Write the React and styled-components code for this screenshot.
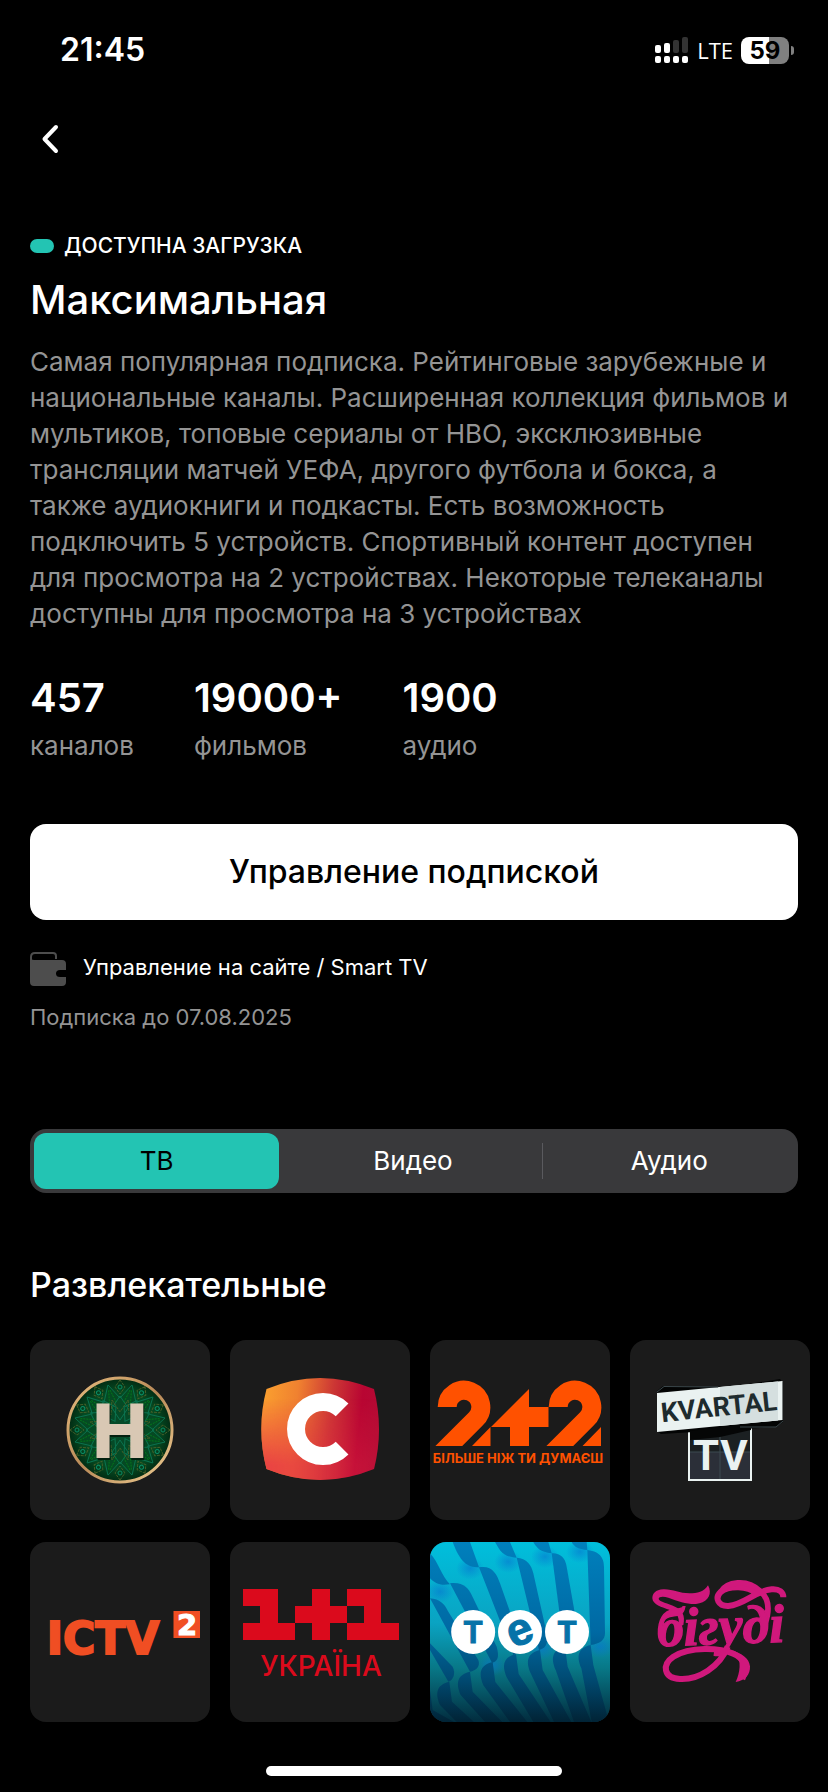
import React, { useState } from "react";
import styled, { createGlobalStyle } from "styled-components";

const GlobalStyle = createGlobalStyle`
    * {
        box-sizing: border-box;
    }
    body {
        margin: 0;
        background-color: #000;
        color: #fff;
        font-family: Inter, "Noto Sans", sans-serif;
    }
`

const Page = styled.div`
    display: flex;
    flex-direction: column;
    overflow-x: hidden;
    min-height: 100vh;
`
const StatusBar = styled.header`
    display: flex;
    justify-content: space-between;
    align-items: center;
    height: 100px;
    padding: 0 34px 0 60px;
`
const Clock = styled.time`
    font-size: 32px;
    line-height: 40px;
    font-weight: 600;
`
const StatusIcons = styled.div`
    display: flex;
    align-items: center;
    gap: 8px;
`
const Network = styled.span`
    font-family: "Open Sans", sans-serif;
    font-size: 22px;
    line-height: 28px;
`
const Battery = styled.div`
    display: flex;
    align-items: center;
    gap: 2px;
`
const BatteryBody = styled.div`
    width: 48px;
    height: 27px;
    border-radius: 8px;
    background: linear-gradient(90deg, #fff 59%, #808080 59%);
    color: #000;
    font-size: 24px;
    line-height: 27px;
    font-weight: 700;
    text-align: center;
`
const BatteryTip = styled.div`
    width: 3px;
    height: 9px;
    border-radius: 0 4px 4px 0;
    background-color: #808080;
`
const NavBar = styled.nav`
    display: flex;
    padding: 16px 28px;
`
const BackButton = styled.button`
    display: flex;
    align-items: center;
    justify-content: center;
    width: 46px;
    height: 46px;
    padding: 0;
    border: none;
    background: none;
    color: #fff;
`
const Content = styled.main`
    display: flex;
    flex-direction: column;
    padding: 52px 30px 0;
`
const Badge = styled.div`
    display: flex;
    align-items: center;
    gap: 10px;
    font-size: 21px;
    line-height: 32px;
    font-weight: 500;
`
const BadgeDot = styled.span`
    width: 24px;
    height: 14px;
    border-radius: 7px;
    background-color: #23c4b3;
`
const Title = styled.h1`
    margin: 12px 0 0;
    font-size: 40px;
    line-height: 52px;
    font-weight: 500;
`
const Description = styled.p`
    margin: 18px 0 0;
    color: #949494;
    font-size: 26px;
    line-height: 36px;
`
const Stats = styled.dl`
    display: flex;
    gap: 60px;
    margin: 40px 0 0;
`
const Stat = styled.div`
    display: flex;
    flex-direction: column-reverse;
`
const StatLabel = styled.dt`
    margin-top: 4px;
    color: #949494;
    font-size: 26px;
    line-height: 36px;
`
const StatValue = styled.dd`
    margin: 0;
    font-size: 40px;
    line-height: 52px;
    font-weight: 600;
`
const ManageButton = styled.button`
    height: 96px;
    margin-top: 60px;
    border: none;
    border-radius: 16px;
    background-color: #fff;
    color: #000;
    font-family: inherit;
    font-size: 32px;
    line-height: 40px;
    font-weight: 500;
`
const ManageNote = styled.div`
    display: flex;
    align-items: flex-start;
    gap: 16px;
    margin-top: 31px;
    font-size: 22px;
    line-height: 32px;
`
const Expires = styled.p`
    margin: 12px 0 0;
    color: #949494;
    font-size: 22px;
    line-height: 36px;
`
const Tabs = styled.div`
    display: grid;
    grid-template-columns: 1fr 1px 1fr 1px 1fr;
    height: 64px;
    margin-top: 94px;
    border-radius: 16px;
    background-color: #39393b;
`
const Tab = styled.button`
    min-width: 0;
    margin: 4px 6px 4px 4px;
    padding: 0;
    border: none;
    border-radius: 12px;
    background-color: ${props => props.$active ? "#23c4b3" : "transparent"};
    color: ${props => props.$active ? "#000" : "#fff"};
    font-family: inherit;
    font-size: 26px;
    line-height: 36px;
`
const TabDivider = styled.span`
    margin: 14px 0;
    background-color: ${props => props.$visible ? "#5a5a5e" : "transparent"};
`
const SectionTitle = styled.h2`
    margin: 71px 0 0;
    font-size: 34px;
    line-height: 42px;
    font-weight: 500;
`
const ChannelGrid = styled.div`
    display: grid;
    grid-template-columns: repeat(4, 180px);
    gap: 22px 20px;
    margin-top: 34px;
`
const Channel = styled.a`
    display: block;
    height: 180px;
    border-radius: 16px;
    overflow: hidden;
    background-color: #1b1b1b;
`
const Logo = styled.svg`
    display: block;
    width: 100%;
    height: 100%;
`
const HomeIndicator = styled.div`
    align-self: center;
    width: 296px;
    height: 10px;
    margin: auto 0 16px;
    border-radius: 5px;
    background-color: #fff;
`

const SignalIcon = () => (
    <svg width="34" height="28" viewBox="0 0 34 28" fill="#fff" aria-hidden="true">
        <rect x="0" y="9" width="6" height="8" rx="2" />
        <rect x="9" y="7" width="6" height="10" rx="2" />
        <rect x="18" y="4" width="6" height="13" rx="2" fill="#333" />
        <rect x="27" y="1" width="6" height="16" rx="2" fill="#333" />
        {[0, 9, 18, 27].map(x => <rect key={x} x={x} y="20" width="6" height="7" rx="2" />)}
    </svg>
)

const BackIcon = () => (
    <svg width="46" height="46" viewBox="0 0 46 46" fill="none" aria-hidden="true">
        <path d="M28 11 L16.500 23 L28 35" stroke="#fff" strokeWidth="4" strokeLinecap="round" strokeLinejoin="round" />
    </svg>
)

const WalletIcon = () => (
    <svg width="37" height="36" viewBox="0 0 37 36" aria-hidden="true">
        <path d="M1 12 V6 Q1 2 5 2 H23 Q26 2 26 5 V8" fill="none" stroke="#4d4d4d" strokeWidth="2" />
        <path d="M0 7 Q1 9 4 9 H32 Q36 9 36 13 V19 H30 Q26 19 26 22.500 Q26 26 30 26 H36 V31 Q36 35 32 35 H4 Q0 35 0 31 Z" fill="#4d4d4d" />
    </svg>
)

const NovyiLogo = () => (
    <Logo viewBox="0 0 180 180" role="img" aria-label="Новый канал">
        <defs>
            <radialGradient id="green">
                <stop offset="0" stopColor="#054a2a" />
                <stop offset=".75" stopColor="#054a22" />
                <stop offset="1" stopColor="#022a12" />
            </radialGradient>
            <linearGradient id="gold" x2="1" y2="1">
                <stop offset="0" stopColor="#e8bd80" />
                <stop offset=".5" stopColor="#b98a58" />
                <stop offset="1" stopColor="#f0cf94" />
            </linearGradient>
        </defs>
        <circle cx="90" cy="90" r="52" fill="url(#green)" stroke="url(#gold)" strokeWidth="3" />
        {[0, 30, 60, 90, 120, 150, 180, 210, 240, 270, 300, 330].map(angle => (
            <g key={angle} transform={`rotate(${angle} 90 90)`} fill="none" strokeWidth="1">
                <path d="M90 56 L82 68 L90 80 L98 68 Z M78 45 L90 58 L102 45" stroke="#0b7350" />
                <path d="M90 40 L85 47 L90 54 L95 47 Z M82 60 L90 72 L98 60" stroke="#465e28" strokeDasharray="3 1" />
                <circle cx="90" cy="47" r="2" stroke="#0b8a62" />
                <path d="M80 50 L86 62 M100 50 L94 62" stroke="#04781b" strokeDasharray="2 1" />
            </g>
        ))}
        <text x="91" y="119" textAnchor="middle" fontFamily="Liberation Sans" fontWeight="700" fontSize="76" fill="#02200f" stroke="#02200f" strokeWidth="2">Н</text>
        <text x="90" y="117" textAnchor="middle" fontFamily="Liberation Sans" fontWeight="700" fontSize="76" fill="#d9c8b4" stroke="#d9c8b4" strokeWidth="2">Н</text>
    </Logo>
)

const StbLogo = () => (
    <Logo viewBox="0 0 180 180" role="img" aria-label="СТБ">
        <defs>
            <linearGradient id="stb" x1="0" y1=".2" x2="1" y2=".3">
                <stop offset="0" stopColor="#fba12f" />
                <stop offset=".3" stopColor="#f08130" />
                <stop offset=".6" stopColor="#cc3634" />
                <stop offset=".85" stopColor="#b80532" />
                <stop offset="1" stopColor="#b50a34" />
            </linearGradient>
            <linearGradient id="stbRed" x2="0" y2="1">
                <stop offset=".2" stopColor="#e62e48" stopOpacity="0" />
                <stop offset=".85" stopColor="#e62e48" />
            </linearGradient>
            <linearGradient id="stbFade">
                <stop offset="0" stopColor="#fff" />
                <stop offset="1" stopColor="#000" />
            </linearGradient>
            <mask id="stbMask">
                <rect width="180" height="180" fill="url(#stbFade)" />
            </mask>
        </defs>
        <path d="M36.500 49 Q90 27 144 49 Q154 89 144 129 Q90 151 36.500 129 Q26 89 36.500 49 Z" fill="url(#stb)" />
        <path d="M36.500 49 Q90 27 144 49 Q154 89 144 129 Q90 151 36.500 129 Q26 89 36.500 49 Z" fill="url(#stbRed)" mask="url(#stbMask)" />
        <path d="M112.100 69.900 A27 27 0 1 0 112.100 108.100" fill="none" stroke="#fff" strokeWidth="18" />
    </Logo>
)

const TwoPlusTwoLogo = () => (
    <Logo viewBox="0 0 180 180" role="img" aria-label="2+2">
        <defs>
            <clipPath id="baseline">
                <rect width="180" height="106" />
            </clipPath>
        </defs>
        <g clipPath="url(#baseline)" fill="none" stroke="#ff5100" strokeWidth="19">
            <path d="M17.200 67 A16.800 16.800 0 1 1 45.900 78.900 L8 116.800" />
            <path d="M128.200 67 A16.800 16.800 0 1 1 156.900 78.900 L119 116.800" />
        </g>
        <path d="M99 49 V67 H118.500 V87 H99 V106 H80 V87 H61 Z M42 106 L60.500 87 V106 Z M152.500 106 L171 87 V106 Z" fill="#ff5100" />
        <text x="88" y="123" textAnchor="middle" fontFamily="Inter" fontWeight="700" fontSize="13" fill="#ff5100">БІЛЬШЕ НІЖ ТИ ДУМАЄШ</text>
    </Logo>
)

const KvartalLogo = () => (
    <Logo viewBox="0 0 180 180" role="img" aria-label="Квартал ТВ">
        <rect x="59" y="80" width="62" height="60" fill="#2b2f38" stroke="#eaf2f1" strokeWidth="2" />
        <path d="M60 80 H120 V112 H60 Z" fill="#1b2022" />
        <path d="M60 112 H120 M90 90 V139" stroke="#3d4b50" />
        <text x="76" y="130" textAnchor="middle" fontFamily="Roboto" fontWeight="700" fontSize="42" fill="#eaf2f1">T</text>
        <text x="104" y="130" textAnchor="middle" fontFamily="Roboto" fontWeight="700" fontSize="42" fill="#eaf2f1">V</text>
        <path d="M27 51 L33 46 L100 47 L150 39 L153 43 L153 82 L146 87 L31 94 L27 91 Z" fill="#030404" />
        <path d="M60 91 L121 83 V90 L90 97 L60 100 Z" fill="#050606" />
        <path d="M27 53 L152.500 41 V80 L27 92 Z" fill="#eaf2f1" />
        <path d="M90 47 L148 41.500 V80.500 L90 86 Z" fill="#d5dfdf" />
        <path d="M27 52 L34 46.500 L88 47 M153 81 L146 87 L110 87" fill="none" stroke="#3b474b" />
        <text x="89" y="76" transform="rotate(-6 90 67)" textAnchor="middle" fontFamily="Roboto" fontWeight="700" fontSize="27" fill="#1e2b2e">KVARTAL</text>
    </Logo>
)

const IctvLogo = () => (
    <Logo viewBox="0 0 180 180" role="img" aria-label="ICTV2">
        <text x="73" y="112" textAnchor="middle" fontFamily="DejaVu Sans" fontWeight="700" fontSize="44" fill="#f04e23" stroke="#f04e23" strokeWidth="2">ICTV</text>
        <rect x="143.500" y="69" width="26.500" height="27" fill="#f04e23" />
        <text x="157" y="93" textAnchor="middle" fontFamily="DejaVu Sans" fontWeight="700" fontSize="29" fill="#fff" stroke="#fff">2</text>
    </Logo>
)

const OnePlusOneLogo = () => (
    <Logo viewBox="0 0 180 180" role="img" aria-label="1+1 Україна" fill="#db0a1c">
        <rect x="13" y="47" width="35" height="17" />
        <rect x="30" y="64" width="18" height="17" />
        <rect x="13" y="81" width="52" height="17" />
        <rect x="65" y="64" width="52" height="17" />
        <rect x="82" y="47" width="18" height="51" />
        <rect x="117" y="47" width="34" height="17" />
        <rect x="134" y="64" width="17" height="17" />
        <rect x="117" y="81" width="52" height="17" />
        <text x="91" y="134" textAnchor="middle" fontFamily="Inter" fontWeight="500" fontSize="28">УКРАЇНА</text>
    </Logo>
)

const upperBlades = [
    "M98 36 H150 L177 112 C140 112 120 95 98 36 Z",
    "M177 112 C215 105 230 130 240 160 L300 330 C300 360 290 372 280 375 Z",
    "M225 36 H270 L290 83 C245 80 240 60 225 36 Z",
    "M290 83 C320 85 335 105 340 130 L378 300 C388 345 375 355 357 360 Z",
    "M340 36 H385 L395 70 C360 66 350 54 340 36 Z",
    "M395 70 C430 70 436 92 440 110 L475 310 C475 340 455 348 432 350 Z",
    "M455 36 H500 L502 60 C475 58 462 50 455 36 Z",
    "M502 60 C545 65 552 90 552 110 L555 310 C555 330 540 342 512 345 Z",
    "M30 70 C55 95 65 140 90 163 C60 168 45 160 30 145 Z",
    "M90 160 C130 155 145 175 155 195 L230 350 C240 385 230 395 216 398 Z",
    "M30 205 C60 208 72 220 85 245 L175 390 C182 410 168 422 150 425 Z",
    "M30 340 L98 410 C108 430 100 450 85 455 L30 360 Z",
]
const lowerBlades = [
    [30, 480, 60], [88, 455, 120], [150, 425, 205], [218, 396, 280],
    [288, 372, 350], [360, 360, 412], [435, 350, 472], [512, 345, 525],
]

const TetLogo = () => (
    <Logo viewBox="30 36 540 540" role="img" aria-label="ТЕТ">
        <defs>
            <linearGradient id="sea" x2="0" y2="1">
                <stop offset="0" stopColor="#00bfdc" />
                <stop offset=".45" stopColor="#0aa3c2" />
                <stop offset=".7" stopColor="#087887" />
                <stop offset="1" stopColor="#022c3e" />
            </linearGradient>
            <linearGradient id="blade" gradientUnits="userSpaceOnUse" x1="0" y1="36" x2="0" y2="576">
                <stop offset="0" stopColor="#0080bd" />
                <stop offset=".5" stopColor="#0069a3" />
                <stop offset=".75" stopColor="#004c75" />
                <stop offset="1" stopColor="#012335" />
            </linearGradient>
            <radialGradient id="glow">
                <stop offset="0" stopColor="#0873cf" stopOpacity=".6" />
                <stop offset="1" stopColor="#0873cf" stopOpacity="0" />
            </radialGradient>
        </defs>
        <rect x="30" y="36" width="540" height="540" fill="url(#sea)" />
        {[[60, 185], [150, 115], [265, 95], [375, 80], [480, 65], [215, 405], [365, 355], [540, 350]].map(([x, y]) => (
            <ellipse key={x} cx={x} cy={y} rx="42" ry="34" fill="url(#glow)" />
        ))}
        {upperBlades.map(d => <path key={d} d={d} fill="url(#blade)" />)}
        {lowerBlades.map(([x, y, foot]) => (
            <path
                key={x}
                d={`M${x} ${y} C${x - 35} ${y + 8} ${x - 45} ${y + 30} ${x - 28} ${y + 70} L${foot - 10} 576 H${foot + 42} L${x + 8} ${y + 60} Z`}
                fill="url(#blade)"
            />
        ))}
        <g fill="#fff">
            <circle cx="159.500" cy="306" r="66" />
            <circle cx="300" cy="306" r="66" />
            <circle cx="441" cy="306" r="66" />
        </g>
        <g fontFamily="Liberation Sans" fontWeight="700" textAnchor="middle" fill="#0672a8" stroke="#0672a8" strokeWidth="3">
            <text x="159" y="339" fontSize="92">Т</text>
            <text x="300" y="344" fontSize="136" transform="rotate(-22 300 306)">е</text>
            <text x="441" y="339" fontSize="92">Т</text>
        </g>
    </Logo>
)

const BigudiLogo = () => (
    <Logo viewBox="30 36 540 540" role="img" aria-label="Бігуді" fill="#d0187c">
        <path d="M264 166 C252 186 232 190 208 190 C178 190 158 177 130 178 C106 179 97 192 97 205 C98 224 125 232 150 240 C177 250 178 268 176 290 L190 285 C197 255 186 240 165 230 C145 220 118 216 116 207 C116 199 130 198 145 203 C175 214 200 223 228 222 C258 219 275 200 268 175 Z" />
        <path d="M408 190 C385 166 325 166 302 186 C283 204 295 229 325 228 C375 224 405 182 455 178 C478 176 490 187 490 202" fill="none" stroke="#d0187c" strokeWidth="18" />
        <path d="M302 186 C320 155 380 145 420 183 C450 207 448 245 435 282" fill="none" stroke="#d0187c" strokeWidth="17" />
        <path d="M323 350 C300 410 235 450 180 447 C130 444 125 404 160 380 C210 348 300 353 340 371 C370 384 385 410 367 447" fill="none" stroke="#d0187c" strokeWidth="18" />
        <path d="M348 372 C365 390 360 430 347 456 C376 452 391 434 390 409 C388 384 365 371 335 360 Z" />
        <text x="302" y="342" textAnchor="middle" transform="rotate(-2 300 300)" fontFamily="Liberation Serif" fontStyle="italic" fontWeight="700" fontSize="162" stroke="#d0187c" strokeWidth="4">бігуді</text>
    </Logo>
)

const stats = [
    { value: "457", label: "каналов" },
    { value: "19000+", label: "фильмов" },
    { value: "1900", label: "аудио" },
]

const tabs = ["ТВ", "Видео", "Аудио"]

const channels = [
    NovyiLogo, StbLogo, TwoPlusTwoLogo, KvartalLogo,
    IctvLogo, OnePlusOneLogo, TetLogo, BigudiLogo,
]

const App = () => {
    const [active, setActive] = useState(0);

    return (
        <Page>
            <GlobalStyle />
            <StatusBar>
                <Clock>21:45</Clock>
                <StatusIcons>
                    <SignalIcon />
                    <Network>LTE</Network>
                    <Battery>
                        <BatteryBody>59</BatteryBody>
                        <BatteryTip />
                    </Battery>
                </StatusIcons>
            </StatusBar>
            <NavBar>
                <BackButton type="button" aria-label="Назад">
                    <BackIcon />
                </BackButton>
            </NavBar>
            <Content>
                <Badge>
                    <BadgeDot />
                    ДОСТУПНА ЗАГРУЗКА
                </Badge>
                <Title>Максимальная</Title>
                <Description>
                    Самая популярная подписка. Рейтинговые зарубежные и национальные каналы.
                    Расширенная коллекция фильмов и мультиков, топовые сериалы от HBO,
                    эксклюзивные трансляции матчей УЕФА, другого футбола и бокса, а также
                    аудиокниги и подкасты. Есть возможность подключить 5 устройств. Спортивный
                    контент доступен для просмотра на 2 устройствах. Некоторые телеканалы
                    доступны для просмотра на 3 устройствах
                </Description>
                <Stats>
                    {stats.map(stat => (
                        <Stat key={stat.label}>
                            <StatLabel>{stat.label}</StatLabel>
                            <StatValue>{stat.value}</StatValue>
                        </Stat>
                    ))}
                </Stats>
                <ManageButton type="button">Управление подпиской</ManageButton>
                <ManageNote>
                    <WalletIcon />
                    <span>Управление на сайте / Smart TV</span>
                </ManageNote>
                <Expires>Подписка до 07.08.2025</Expires>
                <Tabs role="tablist">
                    {tabs.map((tab, index) => (
                        <React.Fragment key={tab}>
                            {index > 0 && <TabDivider $visible={active !== index && active !== index - 1} />}
                            <Tab
                                type="button"
                                role="tab"
                                aria-selected={active === index}
                                $active={active === index}
                                onClick={() => setActive(index)}
                            >
                                {tab}
                            </Tab>
                        </React.Fragment>
                    ))}
                </Tabs>
                <SectionTitle>Развлекательные</SectionTitle>
                <ChannelGrid>
                    {channels.map((ChannelLogo, index) => (
                        <Channel key={index} href="#">
                            <ChannelLogo />
                        </Channel>
                    ))}
                </ChannelGrid>
            </Content>
            <HomeIndicator />
        </Page>
    )
}

export default App;
